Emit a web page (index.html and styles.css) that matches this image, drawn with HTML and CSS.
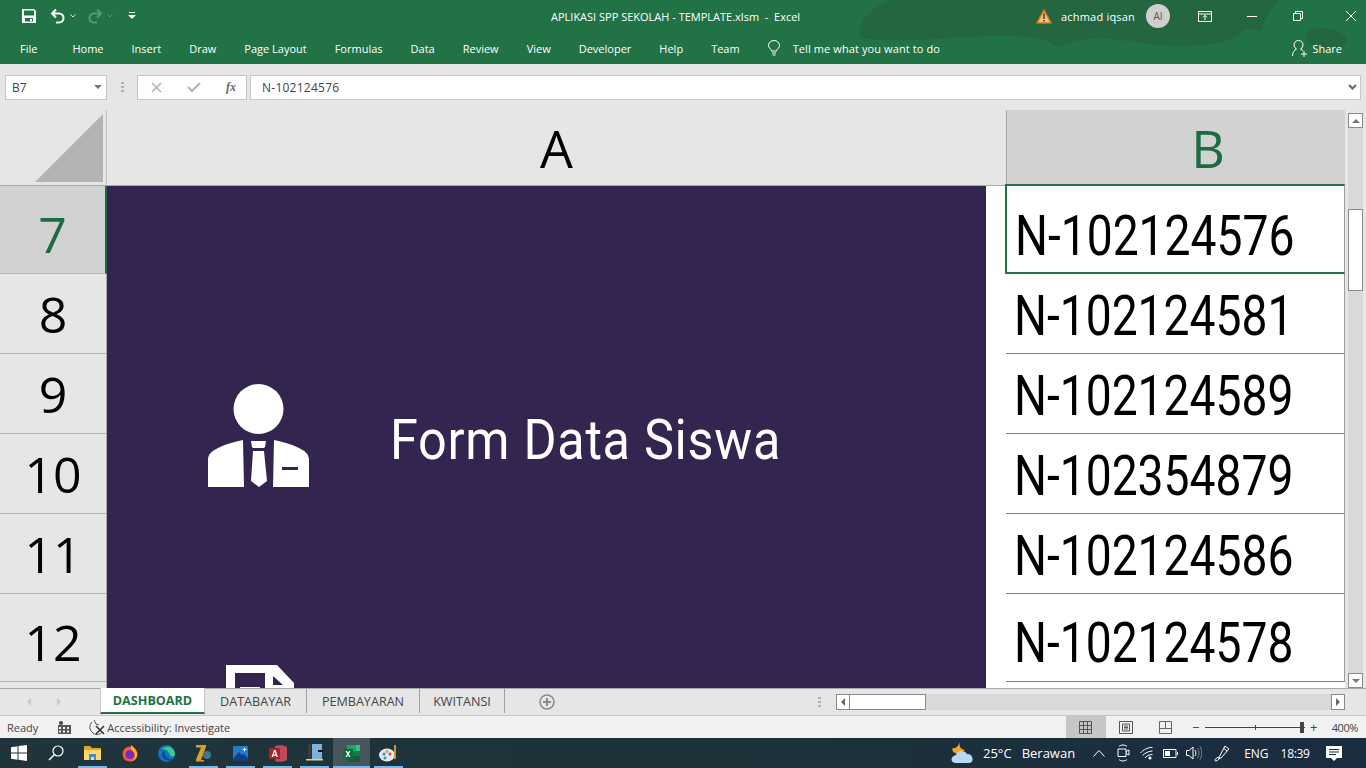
FILE: index.html
```html
<!DOCTYPE html>
<html lang="en">

<head>
    <meta charset="utf-8">
    <title>APLIKASI SPP SEKOLAH - TEMPLATE.xlsm - Excel</title>
    <link rel="stylesheet" href="styles.css">
</head>

<body>
    <header class="ribbon">
        <svg class="ribbon-art" width="1366" height="64" viewBox="0 0 1366 64">
            <path fill="#24663f" d="M860 38C858 20 872 6 892 0H1278C1270 10 1264 20 1262 30L1243 30C1243 36 1225 44 1195 46 1160 48 1130 40 1100 38 1085 38 1070 44 1055 47 1050 38 1030 36 1000 36 960 36 900 44 860 38z"/>
            <path fill="#24663f" d="M1306 38c0-8 8-12 16-10 10 0 14 2 20 6 8 4 6 10 2 12-8 4-14 6-20 4-8-4-18-4-18-12z"/>
        </svg>
        <div class="title-row">
            <div class="quick-access">
                <svg class="qa-save" width="16" height="16" viewBox="0 0 16 16"><path fill="#fff" d="M1 1h12l2 2v12H1zm2 1.5v5h10v-5zM4 10v3.5h8V10zm5 1h2v2H9z" fill-rule="evenodd"/></svg>
                <svg class="qa-undo" width="16" height="16" viewBox="0 0 16 16"><path fill="none" stroke="#fff" stroke-width="2" d="M6 1.5 2 5.5l4 4M2 5.5h7c6 0 6 9 0 9H6"/></svg>
                <svg class="qa-arrow" width="6" height="4" viewBox="0 0 6 4"><path fill="none" stroke="#d8e6dd" d="m.5.5 2.500 2.500L5.500.5"/></svg>
                <svg class="qa-redo" width="16" height="16" viewBox="0 0 16 16"><path fill="none" stroke="#59967a" stroke-width="2" d="M10 1.500l4 4-4 4M14 5.500H7c-6 0-6 9 0 9h3"/></svg>
                <svg class="qa-arrow dim" width="6" height="4" viewBox="0 0 6 4"><path fill="none" stroke="#59967a" d="m.5.5 2.500 2.500L5.500.5"/></svg>
                <svg class="qa-custom" width="8" height="8" viewBox="0 0 8 8"><path fill="#fff" d="M1 0h6v1H1zM0 3h8L4 7z"/></svg>
            </div>
            <div class="doc-title">APLIKASI SPP SEKOLAH - TEMPLATE.xlsm&nbsp; -&nbsp; Excel</div>
            <div class="window-tools">
                <svg class="warn" width="16" height="15" viewBox="0 0 16 15"><path fill="#f4c27a" stroke="#d9731a" stroke-width="1.500" d="M8 1 15 14H1z"/><path fill="#333" d="M7.300 4.500h1.400v5.500H7.300zm0 6.500h1.400v1.500H7.300z"/></svg>
                <span class="user-name">achmad iqsan</span>
                <span class="avatar">AI</span>
                <svg class="win-display" width="14" height="11" viewBox="0 0 14 11"><path fill="none" stroke="#fff" d="M.5.500h13v10H.5zM.5 3h13M7 9V4.500M5 6.300l2-2 2 2"/></svg>
                <svg class="win-min" width="10" height="1" viewBox="0 0 10 1"><path fill="#fff" d="M0 0h10v1H0z"/></svg>
                <svg class="win-restore" width="10" height="10" viewBox="0 0 10 10"><path fill="none" stroke="#fff" d="M.5 2.500h7v7h-7zM2.500 2.500v-2h7v7h-2"/></svg>
                <svg class="win-close" width="10" height="10" viewBox="0 0 10 10"><path stroke="#fff" d="m0 0 10 10M10 0 0 10"/></svg>
            </div>
        </div>
        <nav class="tabs-row">
            <span class="tab tab-file">File</span>
            <span class="tab">Home</span>
            <span class="tab">Insert</span>
            <span class="tab">Draw</span>
            <span class="tab">Page Layout</span>
            <span class="tab">Formulas</span>
            <span class="tab">Data</span>
            <span class="tab">Review</span>
            <span class="tab">View</span>
            <span class="tab">Developer</span>
            <span class="tab">Help</span>
            <span class="tab">Team</span>
            <span class="tell-me">
                <svg width="12" height="16" viewBox="0 0 12 16"><path fill="none" stroke="#fff" d="M3.500 11C3 8.500.5 8 .5 5.500a5.500 5 0 0 1 11 0C11.500 8 9 8.500 8.500 11zM4 13h4M4.500 15h3"/></svg>
                Tell me what you want to do
            </span>
            <span class="share">
                <svg width="16" height="17" viewBox="0 0 16 17"><path fill="none" stroke="#fff" d="M.5 16c0-4 2-6 4-7a4.500 4.500 0 1 1 4 0c1 .5 2 1 2.500 2M12 11v6M9 14h6"/></svg>
                Share
            </span>
        </nav>
    </header>

    <section class="formula-bar">
        <div class="name-box">B7<i class="caret"></i></div>
        <div class="grip"></div>
        <div class="fx-box">
            <svg width="11" height="11" viewBox="0 0 11 11"><path stroke="#b4b4b4" stroke-width="1.600" d="m1 1 9 9M10 1 1 10"/></svg>
            <svg width="14" height="11" viewBox="0 0 14 11"><path fill="none" stroke="#b4b4b4" stroke-width="2.200" d="m1 5 4 4 8-8"/></svg>
            <em class="fx">fx</em>
        </div>
        <div class="formula-input">N-102124576
            <svg class="formula-expand" width="9" height="6" viewBox="0 0 9 6"><path fill="none" stroke="#6a6a6a" stroke-width="2" d="m1 1 3.500 3.500L8 1"/></svg>
        </div>
    </section>

    <main class="sheet">
        <div class="sheet-main">
            <div class="col-heads">
                <div class="corner"><i class="corner-tri"></i></div>
                <div class="col-a">A</div>
                <div class="col-b">B</div>
            </div>
            <div class="sheet-body">
                <div class="row-heads">
                    <div class="row-head row-sel r88">7</div>
                    <div class="row-head r80">8</div>
                    <div class="row-head r80">9</div>
                    <div class="row-head r80">10</div>
                    <div class="row-head r80">11</div>
                    <div class="row-head r88">12</div>
                </div>
                <div class="panel">
                    <div class="menu-item">
                        <svg class="menu-icon" width="102" height="104" viewBox="0 0 102 104">
                            <circle cx="50.500" cy="25" r="25" fill="#fff"/>
                            <path fill="#fff" d="M0 103V76c0-6 4-9 10-12 8-4 16-6 25-8l1 47zM101 103V76c0-6-4-9-10-12-8-4-16-6-25-8l-1 47zM43 57h15l-1 6-1 1H45l-1-1zM45 67h11l3 30-8 6-8-6z"/>
                            <path fill="#342450" d="M74 83h16v3H74z"/>
                        </svg>
                        <span class="menu-label"><span class="narrow">Form Data Siswa</span></span>
                    </div>
                    <div class="menu-item next-item">
                        <svg class="menu-icon" width="68" height="40" viewBox="0 0 68 40">
                            <path fill="#fff" d="M0 0h51l17 18v22H0z"/>
                            <path fill="#342450" d="M9 8h30v16H9zM47 11l10 9H47z"/>
                            <path fill="#fff" d="M14 22h20v4H14z"/>
                        </svg>
                    </div>
                </div>
                <div class="gap-col"></div>
                <div class="cells">
                    <div class="cell cell-sel r88"><span class="narrow">N-102124576</span></div>
                    <div class="cell r80"><span class="narrow">N-102124581</span></div>
                    <div class="cell r80"><span class="narrow">N-102124589</span></div>
                    <div class="cell r80"><span class="narrow">N-102354879</span></div>
                    <div class="cell r80"><span class="narrow">N-102124586</span></div>
                    <div class="cell r88"><span class="narrow">N-102124578</span></div>
                </div>
            </div>
        </div>
        <aside class="vscroll">
            <button class="sb-btn"><i class="tri-up"></i></button>
            <div class="v-track"><div class="v-thumb"></div></div>
            <button class="sb-btn"><i class="tri-down"></i></button>
        </aside>
    </main>

    <section class="sheet-tabs">
        <div class="tab-nav">
            <i class="tri-left pale"></i>
            <i class="tri-right pale"></i>
        </div>
        <div class="sheet-tab active">DASHBOARD</div>
        <div class="sheet-tab tab-databayar">DATABAYAR</div>
        <div class="sheet-tab tab-pembayaran">PEMBAYARAN</div>
        <div class="sheet-tab tab-kwitansi">KWITANSI</div>
        <svg class="add-sheet" width="16" height="16" viewBox="0 0 16 16"><circle cx="8" cy="8" r="7" fill="none" stroke="#8a8a8a" stroke-width="1.500"/><path stroke="#8a8a8a" stroke-width="2" d="M8 4v8M4 8h8"/></svg>
        <div class="grip tab-grip"></div>
        <div class="hscroll">
            <button class="sb-btn small"><i class="tri-left"></i></button>
            <div class="h-thumb"></div>
            <div class="h-track"></div>
            <button class="sb-btn small"><i class="tri-right"></i></button>
        </div>
    </section>

    <footer class="status-bar">
        <span class="status-ready">Ready</span>
        <svg class="status-macro" width="13" height="13" viewBox="0 0 13 13"><path fill="#555" d="M0 4h13v9H0z"/><path fill="#f1f1f1" d="M1 6h2v2H1zm4 0h2v2H5zm4 0h2v2H9zM1 9.500h2v2H1zm4 0h2v2H5zm4 0h2v2H9z"/><circle cx="3" cy="2" r="2" fill="#444"/></svg>
        <svg class="status-access" width="16" height="15" viewBox="0 0 16 15"><path fill="none" stroke="#555" d="M3 2C0 5 0 10 4 13s8 1 9-1M5 0l2 4 3 1"/><path stroke="#333" stroke-width="1.600" d="m7 6 8 8M15 6l-8 8"/></svg>
        <span class="status-text">Accessibility: Investigate</span>
        <div class="status-right">
            <span class="view-btn active">
                <svg width="13" height="13" viewBox="0 0 13 13"><path fill="none" stroke="#555" d="M.5.500h12v12H.5zM4.500.500v12M8.500.500v12M.5 4.500h12M.5 8.500h12"/></svg>
            </span>
            <span class="view-btn">
                <svg width="14" height="13" viewBox="0 0 14 13"><path fill="none" stroke="#555" d="M.5.500h13v12H.5zM3.500 3h7v7h-7zM5 5h4M5 6.500h4M5 8h4"/></svg>
            </span>
            <span class="view-btn">
                <svg width="13" height="13" viewBox="0 0 13 13"><path fill="none" stroke="#666" d="M.5.500h12v12H.5zM6.500.500v7h-6M6.500 7.500h6"/></svg>
            </span>
            <span class="zoom-sign">−</span>
            <span class="zoom-slider"><i class="zoom-tick"></i><i class="zoom-knob"></i></span>
            <span class="zoom-sign">+</span>
            <span class="zoom-value">400%</span>
        </div>
    </footer>

    <footer class="taskbar">
        <span class="task-btn">
            <svg width="16" height="16" viewBox="0 0 16 16"><path fill="#fff" d="m0 2.300 6.500-1v6.300H0zM7.500 1.100 16 0v7.600H7.500zM0 8.500h6.500v6.300L0 13.700zM7.500 8.500H16V16l-8.500-1.200z"/></svg>
        </span>
        <span class="task-btn">
            <svg width="16" height="16" viewBox="0 0 16 16"><circle cx="10" cy="6" r="5" fill="none" stroke="#fff" stroke-width="1.200"/><path stroke="#fff" stroke-width="1.400" d="M6.500 9.500 1 15"/></svg>
        </span>
        <span class="task-btn open">
            <svg width="17" height="16" viewBox="0 0 17 16"><path fill="#e0a81f" d="M0 1h6l2 2h9v12H0z"/><path fill="#ffd96b" d="M0 5h17v10H0z"/><path fill="#3a8fd6" d="M5 9h7v6h-2v-3H7v3H5z"/></svg>
        </span>
        <span class="task-btn">
            <svg width="16" height="17" viewBox="0 0 16 17"><circle cx="8" cy="9" r="7.500" fill="#ff5a2c"/><circle cx="8" cy="9.500" r="4.500" fill="#6c2fc2"/><path fill="#ffb21e" d="M9 0c3 2 5 5 6 8 1 5-3 9-7 8 3 0 5-2 5-5 0-4-3-5-4-7z"/><path fill="#e82a7c" d="M1 12c2 3 5 4.500 8 4-3 1-7 0-8-4z"/></svg>
        </span>
        <span class="task-btn">
            <svg width="17" height="17" viewBox="0 0 17 17"><circle cx="8.500" cy="8.500" r="8.500" fill="#1572c4"/><path fill="#39d07c" d="M4 4c4-4 12-3 13 5 0 3-4 3-5 1C11 6 7 4 4 4z"/><path fill="#0c4f8c" d="M5 13c-2-3-1-6 2-7-1 3 1 8 6 8 1 0 2 0 3-1-3 4-8 3-11 0z"/></svg>
        </span>
        <span class="task-btn open">
            <svg width="18" height="18" viewBox="0 0 18 18"><path fill="#d2a32e" d="M1 1h10v2L6 16h3v1.500H1v-2L6 3.500H1z"/><circle cx="12" cy="11" r="4" fill="#2d7f7a"/><path stroke="#7a5fb0" d="M9 13h6M12 8v6"/></svg>
        </span>
        <span class="task-btn open">
            <svg width="15" height="15" viewBox="0 0 15 15"><path fill="#1f7cc7" d="M0 0h15v15H0z"/><path fill="#123f80" d="m0 13 6-7 3 3 2-1 4 4v3H0z"/><path fill="#fff" d="M9.500 3h1.500V1.500h1V3h1.500v1H12v1.500h-1V4H9.500z"/></svg>
        </span>
        <span class="task-btn open">
            <svg width="18" height="17" viewBox="0 0 18 17"><path fill="#bf4b57" d="M6 1c6-2 12 0 12 2v11c0 2-6 4-12 2z"/><path fill="#a4262c" d="M0 3h11v11H0z"/><path fill="#fff" d="M5 5h1.500L9 12H7.600l-.4-1.300H4.500L4 12H2.600zm.7 1.500-.9 3h1.900z"/></svg>
        </span>
        <span class="task-btn open">
            <svg width="18" height="18" viewBox="0 0 18 18"><path fill="#3b3b3b" d="M2 0h3v15H2z"/><path fill="#7db3dc" d="M6 0h10v15H6z"/><path fill="#111" d="M12 6h5v2h-5z"/><path fill="#e9d08a" d="M0 15h17v1.500H0z"/></svg>
        </span>
        <span class="task-btn open current">
            <svg width="17" height="17" viewBox="0 0 17 17"><path fill="#21a366" d="M4 0h9v6H4z"/><path fill="#33c481" d="M13 0h4v6h-4z"/><path fill="#107c41" d="M4 6h13v5H4z"/><path fill="#185c37" d="M4 11h13v6H4z"/><path fill="#0f6b3a" d="M0 4h10v10H0z"/><path fill="#fff" d="M2.500 6h1.600L5 7.800 6 6h1.500L5.800 9l1.700 3H6L5 10.100 3.900 12H2.400l1.800-3z"/></svg>
        </span>
        <span class="task-btn open">
            <svg width="20" height="18" viewBox="0 0 20 18"><ellipse cx="8" cy="11" rx="8" ry="6.500" fill="#dcebf5"/><circle cx="5" cy="10" r="1.500" fill="#3b82c4"/><circle cx="8" cy="7.500" r="1.500" fill="#e2a32a"/><circle cx="11" cy="10" r="1.500" fill="#cc4a4a"/><circle cx="6" cy="14" r="1.500" fill="#46a25a"/><path stroke="#d98a34" stroke-width="2" d="M16 1v14"/></svg>
        </span>
        <div class="tray">
            <svg class="tray-weather" width="24" height="22" viewBox="0 0 24 22"><path fill="#f4a62a" d="M9 0c-1 4 0 7 5 8l-6 4C2 12 0 7 2 6c2 1 5-1 7-6z"/><path fill="#b8d8f3" d="M5 21c-6 0-6-7 0-8 1-5 9-5 11-1 6-1 8 9 2 9z"/></svg>
            <span class="tray-temp">25°C</span>
            <span class="tray-weather-text">Berawan</span>
            <svg class="tray-chevron" width="12" height="7" viewBox="0 0 12 7"><path fill="none" stroke="#fff" d="m.5 6.500 5.500-6 5.500 6"/></svg>
            <svg class="tray-meet" width="13" height="18" viewBox="0 0 13 18"><path fill="none" stroke="#fff" d="M1 5h8v7.500H1zM9 7.500l3-1.500v5l-3-1.500M2 2.500c2-2 6-2 8 0M2 15.500c2 2 6 2 8 0"/></svg>
            <svg class="tray-wifi" width="13" height="13" viewBox="0 0 13 13"><path fill="none" stroke="#fff" d="M.5 6C3 3 8 0 12.500 .5M2.500 8.500C5 6 9 4 12.500 4M5 11c1.500-2 4-3.500 7.500-3.500"/><circle cx="10" cy="11" r="1.500" fill="#fff"/></svg>
            <svg class="tray-battery" width="15" height="9" viewBox="0 0 15 9"><path fill="none" stroke="#fff" d="M.5.500h12.500v8H.5z"/><path fill="#fff" d="M2 2h5v5H2zM14 3h1v3h-1z"/></svg>
            <svg class="tray-speaker" width="16" height="14" viewBox="0 0 16 14"><path fill="none" stroke="#fff" d="M.5 4.500h2.500L7 1v12L3 9.500H.5z"/><path fill="none" stroke="#fff" d="M9 4c1.200 2 1.200 4 0 6"/><path fill="none" stroke="#7d8b98" d="M11.500 2c2 3 2 7 0 10M14 .5c2.500 4 2.500 9 0 13"/></svg>
            <svg class="tray-pen" width="16" height="17" viewBox="0 0 16 17"><path fill="none" stroke="#fff" d="M11 1l4 3-8 9-2 1 .5-2.500zM9.500 3 13 6M5 12c-4 1-5 4-3 4 2 0 2-2 4-3"/></svg>
            <span class="tray-lang">ENG</span>
            <span class="tray-time">18:39</span>
            <svg class="tray-note" width="16" height="15" viewBox="0 0 16 15"><path fill="#fff" d="M0 0h16v12h-5l-3 3-3-3H0z"/><path fill="#1a2c3e" d="M3 3h10v1H3zm0 2.500h10v1H3zM3 8h7v1H3z"/></svg>
        </div>
    </footer>
</body>
</html>
```

FILE: styles.css
```css
* {
    margin: 0;
    padding: 0;
    box-sizing: border-box;
}

html, body {
    height: 768px;
    overflow: hidden;
}

body {
    display: flex;
    flex-direction: column;
    width: 1366px;
    font-family: "Open Sans", "Noto Sans", sans-serif;
    font-size: 11px;
    color: #333;
    background: #e6e6e6;
}

button {
    border: 0;
    background: none;
}

/* ribbon */
.ribbon {
    position: relative;
    height: 64px;
    background: #217346;
    color: #fff;
    flex: none;
}

.ribbon-art {
    position: absolute;
    left: 0;
    top: 0;
}

.title-row {
    position: relative;
    display: flex;
    align-items: center;
    height: 32px;
}

.quick-access {
    display: flex;
    align-items: center;
    width: 470px;
    padding-left: 21px;
}

.qa-undo { margin-left: 13px; }
.qa-arrow { margin-left: 4px; }
.qa-redo { margin-left: 11px; }
.qa-custom { margin-left: 15px; }

.doc-title {
    width: 500px;
    padding-left: 81px;
    font-size: 11px;
    white-space: nowrap;
}

.window-tools {
    display: flex;
    align-items: center;
    flex: 1;
    padding-left: 66px;
    position: relative;
}

.user-name {
    margin-left: 9px;
    font-size: 11px;
    letter-spacing: .2px;
}

.avatar {
    display: flex;
    align-items: center;
    justify-content: center;
    width: 24px;
    height: 24px;
    margin-left: 11px;
    border-radius: 50%;
    background: #cfcfcf;
    color: #555;
    font-size: 10px;
}

.win-display { margin-left: 28px; }
.win-min { margin-left: 35px; }
.win-restore { margin-left: 36px; }
.win-close { margin-left: 43px; }

.tabs-row {
    position: relative;
    display: flex;
    align-items: center;
    gap: 28px;
    height: 32px;
    padding-left: 20px;
    font-size: 11px;
    white-space: nowrap;
}

.tab-file { margin-right: 7px; }

.tell-me {
    display: flex;
    align-items: center;
    gap: 13px;
    letter-spacing: .1px;
}

.share {
    display: flex;
    align-items: center;
    gap: 4px;
    margin-left: auto;
    margin-right: 24px;
}

/* formula bar */
.formula-bar {
    display: flex;
    align-items: center;
    flex: none;
    height: 46px;
    padding: 0 5px 0 5px;
    background: #e6e6e6;
}

.name-box,
.fx-box,
.formula-input {
    position: relative;
    height: 25px;
    background: #fff;
    border: 1px solid #c6c6c6;
    display: flex;
    align-items: center;
    font-size: 12px;
    color: #444;
}

.name-box {
    width: 102px;
    padding-left: 6px;
}

.caret {
    position: absolute;
    right: 4px;
    top: 9px;
    border: 4px solid transparent;
    border-top: 4px solid #777;
    border-bottom: 0;
}

.grip {
    width: 3px;
    height: 11px;
    margin: 0 13px 0 14px;
    background: repeating-linear-gradient(#b0b0b0 0 2px, transparent 2px 4px);
}

.fx-box {
    width: 110px;
    justify-content: flex-start;
    gap: 25px;
    padding-left: 13px;
}

.fx {
    font-family: "Liberation Serif", serif;
    font-weight: bold;
    font-size: 12px;
    color: #666;
}

.formula-input {
    flex: 1;
    margin-left: 3px;
    padding-left: 11px;
    letter-spacing: .25px;
}

.formula-expand {
    position: absolute;
    right: 3px;
    top: 8px;
}

/* sheet */
.sheet {
    display: flex;
    flex: none;
    height: 578px;
    overflow: hidden;
}

.sheet-main {
    display: flex;
    flex-direction: column;
    width: 1345px;
    overflow: hidden;
}

.col-heads {
    display: flex;
    flex: none;
    height: 76px;
    font-size: 52px;
    line-height: 76px;
    text-align: center;
    color: #000;
    border-bottom: 1px solid #a8a8a8;
}

.corner {
    display: flex;
    align-items: flex-end;
    justify-content: flex-end;
    width: 107px;
    padding: 0 3px 3px 0;
    border-right: 1px solid #c2c2c2;
}

.corner-tri {
    width: 68px;
    height: 68px;
    background: #b4b4b4;
    clip-path: polygon(100% 0, 100% 100%, 0 100%);
}

.col-a {
    width: 899px;
}

.col-b {
    width: 339px;
    padding-left: 64px;
    background: #d2d2d2;
    color: #1d6b41;
    border-left: 1px solid #ababab;
}

.sheet-body {
    display: flex;
    flex: 1;
    min-height: 0;
}

.row-heads {
    width: 107px;
    flex: none;
    border-right: 1px solid #a8a8a8;
}

.r88 { height: 88px; }
.r80 { height: 80px; }

.row-head {
    display: flex;
    align-items: center;
    justify-content: center;
    font-size: 50px;
    color: #000;
    border-bottom: 1px solid #b4b4b4;
}

.row-head.r88 {
    padding-top: 8px;
}

.row-sel {
    background: #d2d2d2;
    color: #1d6b41;
    border-right: 2px solid #1d6b41;
    margin-right: -1px;
}

.panel {
    width: 879px;
    flex: none;
    padding: 198px 0 0 101px;
    background: #342450;
    color: #fff;
    overflow: hidden;
}

.menu-item {
    display: flex;
    align-items: center;
}

.next-item {
    margin: 177px 0 0 18px;
}

.menu-icon {
    flex: none;
}

.menu-label {
    margin-left: 80px;
    padding-top: 4px;
    font-size: 56px;
    line-height: 1;
    letter-spacing: .8px;
}

.narrow {
    display: inline-block;
    font-family: Roboto, "Liberation Sans", sans-serif;
    transform: scaleX(.825);
    transform-origin: left center;
    white-space: nowrap;
}

.menu-label .narrow {
    transform: scaleX(.9);
}

.gap-col {
    width: 20px;
    flex: none;
    background: #fff;
}

.cells {
    width: 339px;
    flex: none;
    background: #fff;
}

.cell {
    display: flex;
    align-items: center;
    padding: 4px 0 0 8px;
    font-size: 56px;
    line-height: 1;
    color: #000;
    border-bottom: 1px solid #7f7f7f;
    border-right: 1px solid #9c9c9c;
}

.cell.r88 {
    padding-top: 10px;
}

.cell.cell-sel {
    position: relative;
    height: 90px;
    margin: -2px 0 0 -1px;
    padding: 14px 0 0 8px;
    border: 2px solid #217346;
    border-right: 1px solid #9c9c9c;
}

/* vertical scrollbar */
.vscroll {
    display: flex;
    flex-direction: column;
    align-items: center;
    width: 21px;
    padding-top: 3px;
    background: #e6e6e6;
}

.sb-btn {
    display: flex;
    align-items: center;
    justify-content: center;
    flex: none;
    width: 15px;
    height: 15px;
    background: #fff;
    border: 1px solid #8a8a8a;
}

.v-track {
    flex: 1;
    width: 15px;
    padding-top: 81px;
    background: #d9d9d9;
}

.v-thumb {
    height: 82px;
    background: #fff;
    border: 1px solid #8a8a8a;
}

.tri-up,
.tri-down,
.tri-left,
.tri-right {
    display: block;
    width: 0;
    height: 0;
    border: 4px solid transparent;
}

.tri-up { border-bottom-color: #777; border-top: 0; }
.tri-down { border-top-color: #777; border-bottom: 0; }
.tri-left { border-right-color: #666; border-left: 0; }
.tri-right { border-left-color: #666; border-right: 0; }
.tri-left.pale { border-right-color: #c6c6c6; }
.tri-right.pale { border-left-color: #c6c6c6; }

/* sheet tabs */
.sheet-tabs {
    display: flex;
    align-items: stretch;
    flex: none;
    height: 28px;
    border-top: 1px solid #a8a8a8;
    border-bottom: 1px solid #c6c6c6;
    background: #e6e6e6;
    font-size: 12.600px;
    color: #444;
}

.tab-nav {
    display: flex;
    align-items: center;
    gap: 26px;
    width: 100px;
    padding-left: 27px;
}

.sheet-tab {
    display: flex;
    align-items: center;
    justify-content: center;
    height: 24px;
    border-right: 1px solid #a0a0a0;
}

.tab-databayar { width: 102px; }
.tab-pembayaran { width: 113px; }
.tab-kwitansi { width: 85px; }

.sheet-tab.active {
    width: 105px;
    height: 26px;
    margin-top: -1px;
    padding: 0;
    background: #fff;
    color: #217346;
    font-weight: bold;
    border: 0;
    border-bottom: 2px solid #217346;
    border-left: 1px solid #c6c6c6;
    border-right: 1px solid #c6c6c6;
}

.add-sheet {
    align-self: center;
    margin-left: 34px;
}

.tab-grip {
    align-self: center;
    margin: 0 0 0 263px;
}

.hscroll {
    display: flex;
    align-items: center;
    margin-left: 15px;
    width: 509px;
}

.sb-btn.small {
    width: 14px;
    height: 16px;
}

.h-thumb {
    width: 76px;
    height: 16px;
    background: #fff;
    border: 1px solid #8a8a8a;
    border-left: 0;
}

.h-track {
    flex: 1;
    height: 16px;
    background: #d9d9d9;
}

/* status bar */
.status-bar {
    display: flex;
    align-items: center;
    flex: none;
    height: 22px;
    padding-left: 7px;
    background: #f1f1f1;
    font-size: 11px;
    color: #444;
}

.status-macro { margin-left: 20px; }
.status-access { margin-left: 18px; }
.status-text { margin-left: 2px; }

.status-right {
    display: flex;
    align-items: center;
    align-self: stretch;
    margin-left: auto;
    padding-right: 8px;
}

.view-btn {
    display: flex;
    align-items: center;
    justify-content: center;
    width: 40px;
    height: 22px;
}

.view-btn.active {
    background: #c6c6c6;
}

.zoom-sign {
    width: 10px;
    font-size: 13px;
    line-height: 1;
    text-align: center;
    margin-left: 5px;
}

.zoom-slider {
    position: relative;
    width: 100px;
    height: 1px;
    margin: 0 -1px 0 4px;
    background: #444;
}

.zoom-tick {
    position: absolute;
    left: 50px;
    top: -2px;
    width: 1px;
    height: 5px;
    background: #444;
}

.zoom-knob {
    position: absolute;
    right: 1px;
    top: -5px;
    width: 4px;
    height: 11px;
    background: #444;
}

.zoom-value {
    margin-left: 13px;
    letter-spacing: -.4px;
}

/* taskbar */
.taskbar {
    display: flex;
    align-items: center;
    flex: none;
    height: 30px;
    background: linear-gradient(90deg, #20343c, #1d3238 50%, #1a2c40);
    color: #fff;
}

.task-btn {
    position: relative;
    display: flex;
    align-items: center;
    justify-content: center;
    width: 37px;
    height: 30px;
}

.task-btn.open::after {
    content: "";
    position: absolute;
    left: 4px;
    right: 4px;
    bottom: 0;
    height: 2px;
    background: #76b9ed;
}

.task-btn.current {
    background: #46565c;
}

.task-btn.current::after {
    left: 0;
    right: 0;
}

.tray {
    display: flex;
    align-items: center;
    flex: 1;
    padding-left: 544px;
    font-size: 13px;
}

.tray-temp { margin-left: 8px; }
.tray-weather-text { margin-left: 10px; }
.tray-chevron { margin-left: 18px; }
.tray-meet { margin-left: 12px; }
.tray-wifi { margin-left: 10px; }
.tray-battery { margin-left: 10px; }
.tray-speaker { margin-left: 8px; }
.tray-pen { margin-left: 12px; }
.tray-lang { margin-left: 14px; font-size: 12px; }
.tray-time { margin-left: 12px; font-size: 12px; letter-spacing: -.3px; }
.tray-note { margin-left: 16px; }
```
